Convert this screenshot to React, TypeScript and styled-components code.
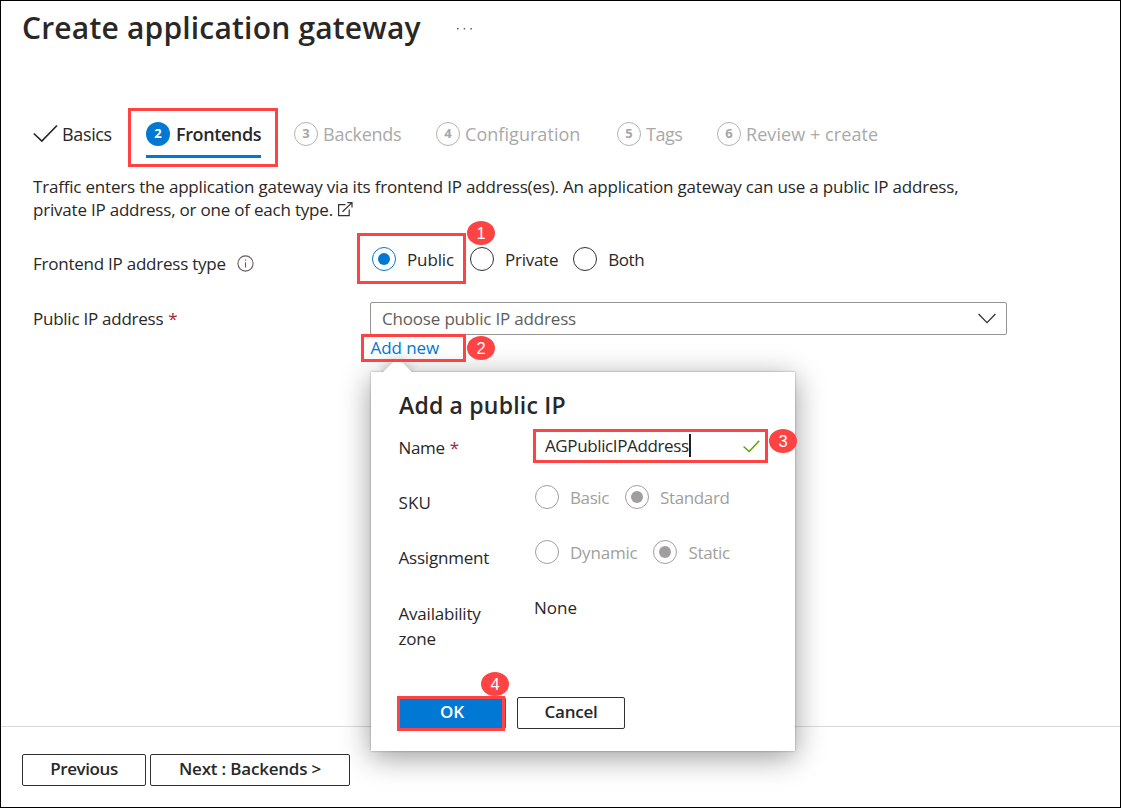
import React from "react";
import styled, { createGlobalStyle, css } from "styled-components";

const RED = "#fd4343";
const BLUE = "#0078d4";
const INK = "#323130";
const MUTED = "#a19f9d";

const GlobalStyle = createGlobalStyle`
  *, *::before, *::after { box-sizing: border-box; }
  body {
    margin: 0;
    background: #fff;
    color: #292827;
    font-family: "Open Sans", "Noto Sans", sans-serif;
    font-size: 17px;
  }
  button { font: inherit; color: inherit; }
`;

const Page = styled.div`
  width: 1121px;
  height: 808px;
  border: 1px solid #000;
  display: flex;
  flex-direction: column;
  overflow: hidden;
`;

const Text = styled.span<{ $ls?: number }>`
  letter-spacing: ${(p) => p.$ls ?? 0}px;
  white-space: nowrap;
`;

const Header = styled.header`
  display: flex;
  height: 107px;
  padding: 7px 0 0 21px;
  gap: 36px;
`;

const Title = styled.h1`
  margin: 0;
  font-size: 30px;
  font-weight: 600;
  line-height: 40px;
`;

const MoreIcon = styled.svg`
  width: 16px;
  height: 4px;
  margin-top: 19px;
`;

const Tabs = styled.nav`
  display: grid;
  grid-template-columns: 95px 166px 142px 181px 100px auto;
  height: 59px;
  padding-left: 32px;
  font-size: 18px;
`;

const Tab = styled.div<{ $disabled?: boolean }>`
  display: flex;
  align-items: center;
  height: 51px;
  gap: 5px;
  color: ${(p) => (p.$disabled ? "#a9a9a9" : "inherit")};
`;

const TabCheck = styled.svg`
  flex: none;
  width: 25px;
  height: 20px;
  margin-right: -1px;
`;

const highlight = css`
  border: 3px solid ${RED};
`;

const ActiveTab = styled.div`
  ${highlight}
  width: 150px;
  height: 59px;
  padding: 0 14px 0 15px;
`;

const ActiveTabInner = styled.div`
  display: flex;
  align-items: center;
  gap: 6px;
  height: 47px;
  padding-top: 1px;
  border-bottom: 3px solid ${BLUE};
  font-weight: 600;
`;

const StepNumber = styled.span<{ $active?: boolean }>`
  display: flex;
  flex: none;
  align-items: center;
  justify-content: center;
  width: 24px;
  height: 24px;
  padding-bottom: 1px;
  border-radius: 50%;
  font-size: 13px;
  font-weight: 700;
  border: ${(p) => (p.$active ? "0" : "1px solid #b3b3b3")};
  background: ${(p) => (p.$active ? BLUE : "#fff")};
  color: ${(p) => (p.$active ? "#fff" : "#a6a6a6")};
`;

const Description = styled.p`
  margin: 8px 0 0 32px;
  line-height: 23px;
  display: flex;
  flex-direction: column;
`;

const DescriptionLine = styled.span`
  display: flex;
  align-items: center;
  gap: 4px;
  height: 23px;
`;

const FormRow = styled.div<{ $top: number }>`
  display: grid;
  grid-template-columns: 324px auto;
  margin-top: ${(p) => p.$top}px;
  padding-left: 32px;
`;

const FormLabel = styled.div<{ $top: number }>`
  display: flex;
  align-items: center;
  height: 24px;
  margin-top: ${(p) => p.$top}px;
`;

const Required = styled.span`
  color: #a4262c;
  margin-left: 5px;
`;

const InfoIcon = styled.svg`
  width: 17px;
  height: 17px;
  margin: 1px 0 0 11px;
`;

const RadioRow = styled.div`
  display: flex;
  align-items: center;
`;

const Highlighted = styled.div<{ $w: number; $h: number; $pad?: number }>`
  ${highlight}
  position: relative;
  z-index: 2;
  display: flex;
  align-items: center;
  width: ${(p) => p.$w}px;
  height: ${(p) => p.$h}px;
  padding-left: ${(p) => p.$pad ?? 0}px;
`;

const Badge = styled.span<{ $left: number; $top: number }>`
  position: absolute;
  left: ${(p) => p.$left}px;
  top: ${(p) => p.$top}px;
  z-index: 3;
  display: flex;
  align-items: center;
  justify-content: center;
  width: 28px;
  height: 24px;
  border-radius: 50%;
  background: ${RED};
  color: #fff;
  font: 400 16.5px "Liberation Sans", sans-serif;
`;

const RadioLabel = styled.label<{ $left?: number; $muted?: boolean }>`
  display: flex;
  align-items: center;
  height: 25px;
  gap: 11px;
  margin-left: ${(p) => p.$left ?? 0}px;
  color: ${(p) => (p.$muted ? MUTED : "inherit")};
  & > ${Text} {
    padding-top: 1px;
  }
`;

const RadioDot = styled.span<{ $color: string; $on?: boolean }>`
  display: flex;
  align-items: center;
  justify-content: center;
  width: 24px;
  height: 24px;
  border: 1px solid ${(p) => p.$color};
  border-radius: 50%;
  &::after {
    content: "";
    width: 12px;
    height: 12px;
    border-radius: 50%;
    background: ${(p) => (p.$on ? p.$color : "transparent")};
  }
`;

const Field = styled.div`
  display: flex;
  flex-direction: column;
  padding-left: 4px;
`;

const Select = styled.div`
  display: flex;
  align-items: center;
  justify-content: space-between;
  width: 637px;
  height: 33px;
  margin-left: 9px;
  padding: 0 10px 0 11px;
  border: 1px solid #979593;
  border-radius: 2px;
  color: #605e5c;
`;

const Chevron = styled.svg`
  width: 18px;
  height: 11px;
`;

const AddNew = styled.div`
  position: relative;
  width: 105px;
  margin-top: -1px;
`;

const Link = styled.a`
  padding-bottom: 1px;
  color: ${BLUE};
`;

const Callout = styled.section`
  position: absolute;
  left: 10px;
  top: 38px;
  z-index: 1;
  width: 424px;
  height: 379px;
  padding: 17px 26px 0 26px;
  background: #fff;
  box-shadow: 0 0 2px rgba(0, 0, 0, 0.35), 0 6px 28px rgba(0, 0, 0, 0.4);
  &::before {
    content: "";
    position: absolute;
    left: 16px;
    top: -10px;
    width: 21px;
    height: 21px;
    transform: rotate(45deg);
    background: #fff;
    box-shadow: 0 0 12px rgba(0, 0, 0, 0.25);
    clip-path: polygon(-60% -60%, 100% -60%, 100% 0, 0 100%, -60% 100%);
  }
`;

const CalloutTitle = styled.h2`
  position: relative;
  margin: 0 0 8px;
  padding-left: 2px;
  font-size: 23px;
  font-weight: 600;
  line-height: 32px;
`;

const CalloutRow = styled.div<{ $h: number }>`
  display: grid;
  grid-template-columns: 136px auto;
  height: ${(p) => p.$h}px;
`;

const CalloutLabel = styled.div`
  padding: 6px 30px 0 1.5px;
  line-height: 25px;
`;

const CalloutValue = styled.div`
  display: flex;
  align-items: center;
  height: 25px;
  padding-left: 1px;
`;

const NameValue = styled(Text)`
  padding-bottom: 2px;
`;

const Caret = styled.span`
  width: 2px;
  height: 23px;
  margin-top: -2px;
  background: #201f1e;
`;

const ValidIcon = styled.svg`
  width: 17px;
  height: 13px;
  margin: 0 5px 0 auto;
`;

const ButtonRow = styled.div<{ $gap: number; $left?: number }>`
  display: flex;
  gap: ${(p) => p.$gap}px;
  padding-left: ${(p) => p.$left ?? 0}px;
`;

const Button = styled.button<{ $w: number; $primary?: boolean }>`
  display: flex;
  justify-content: center;
  width: ${(p) => p.$w}px;
  height: 32px;
  padding: 0;
  border: 1px solid ${(p) => (p.$primary ? BLUE : INK)};
  border-radius: 2px;
  background: ${(p) => (p.$primary ? BLUE : "#fff")};
  color: ${(p) => (p.$primary ? "#fff" : "#292827")};
  font-weight: 600;
  line-height: 28px;
`;

const OkFrame = styled.div`
  position: relative;
  width: 108px;
  &::after {
    ${highlight}
    content: "";
    position: absolute;
    left: -1px;
    top: -1px;
    width: 108px;
    height: 35px;
  }
`;

const Footer = styled.footer`
  height: 81px;
  margin-top: auto;
  padding: 27px 0 0 21px;
  border-top: 1px solid #dadada;
`;

type RadioProps = {
  label: string;
  color: string;
  on?: boolean;
  left?: number;
  muted?: boolean;
  ls?: number;
};

const Radio = ({ label, color, on, left, muted, ls }: RadioProps) => (
  <RadioLabel $left={left} $muted={muted}>
    <RadioDot $color={color} $on={on} />
    <Text $ls={ls}>{label}</Text>
  </RadioLabel>
);

const upcomingSteps = [
  { n: 3, label: "Backends", ls: -0.25 },
  { n: 4, label: "Configuration", ls: 0.05 },
  { n: 5, label: "Tags", ls: -0.5 },
  { n: 6, label: "Review + create", ls: 0.07 },
];

export default function App() {
  return (
    <>
      <GlobalStyle />
      <Page>
        <Header>
          <Title><Text $ls={0.19}>Create application gateway</Text></Title>
          <MoreIcon viewBox="0 0 16 4">
            <path d="M0 1h1.5v1.5H0zM6.7 1h1.5v1.5H6.7zM13.4 1h1.5v1.5h-1.5z" fill="#605e5c" />
          </MoreIcon>
        </Header>
        <Tabs>
          <Tab>
            <TabCheck viewBox="0 0 25 20" fill="none" stroke="#292827" strokeWidth="1.7">
              <path d="M0.8 9.5l8 7.5L24 1.5" />
            </TabCheck>
            <Text $ls={-0.35}>Basics</Text>
          </Tab>
          <ActiveTab>
            <ActiveTabInner>
              <StepNumber $active>2</StepNumber>
              <Text $ls={-0.4}>Frontends</Text>
            </ActiveTabInner>
          </ActiveTab>
          {upcomingSteps.map((s) => (
            <Tab key={s.n} $disabled>
              <StepNumber>{s.n}</StepNumber>
              <Text $ls={s.ls}>{s.label}</Text>
            </Tab>
          ))}
        </Tabs>
        <Description>
          <DescriptionLine>
            <Text $ls={-0.1915}>
              Traffic enters the application gateway via its frontend IP address(es). An application
              gateway can use a public IP address,
            </Text>
          </DescriptionLine>
          <DescriptionLine>
            <Text $ls={-0.21}>private IP address, or one of each type.</Text>
            <svg width="17" height="17" viewBox="0 0 17 17" fill="none" stroke={INK} strokeWidth="1.2">
              <path d="M8.5 3.6H1.6v11h10.6V8.5M5.5 10.8L15 1.6M10.3 1.6H15v4.8" />
            </svg>
          </DescriptionLine>
        </Description>
        <FormRow $top={12}>
          <FormLabel $top={18}>
            <Text $ls={-0.24}>Frontend IP address type</Text>
            <InfoIcon viewBox="0 0 17 17" fill="none" stroke="#605e5c" strokeWidth="1.1">
              <circle cx="8.5" cy="8.5" r="7.6" />
              <path d="M8.5 7.2v5.2M8.5 4.4v1.4" />
            </InfoIcon>
          </FormLabel>
          <RadioRow>
            <Highlighted $w={109} $h={51} $pad={12}>
              <Radio label="Public" color={BLUE} on ls={-0.13} />
              <Badge $left={107} $top={-15}>1</Badge>
            </Highlighted>
            <Radio label="Private" color={INK} left={4} ls={-0.26} />
            <Radio label="Both" color={INK} left={15} ls={-0.4} />
          </RadioRow>
        </FormRow>
        <FormRow $top={18}>
          <FormLabel $top={4}>
            <Text $ls={-0.25}>Public IP address</Text>
            <Required>*</Required>
          </FormLabel>
          <Field>
            <Select>
              <Text $ls={-0.18}>Choose public IP address</Text>
              <Chevron viewBox="0 0 18 11" fill="none" stroke={INK} strokeWidth="1.3">
                <path d="M0.6 1l8.4 8.6L17.4 1" />
              </Chevron>
            </Select>
            <AddNew>
              <Highlighted $w={105} $h={28} $pad={6.5}>
                <Link><Text $ls={-0.07}>Add new</Text></Link>
                <Badge $left={103} $top={-1}>2</Badge>
              </Highlighted>
              <Callout>
                <CalloutTitle><Text $ls={0.2}>Add a public IP</Text></CalloutTitle>
                <CalloutRow $h={55}>
                  <CalloutLabel>
                    <Text $ls={-0.33}>Name</Text>
                    <Required>*</Required>
                  </CalloutLabel>
                  <Highlighted $w={235} $h={34} $pad={9}>
                    <NameValue $ls={-0.38}>AGPublicIPAddress</NameValue>
                    <Caret />
                    <ValidIcon viewBox="0 0 17 13" fill="none" stroke="#57a300" strokeWidth="1.4">
                      <path d="M0.6 6.6l5.6 5L16.2 0.8" />
                    </ValidIcon>
                    <Badge $left={233} $top={-3}>3</Badge>
                  </Highlighted>
                </CalloutRow>
                <CalloutRow $h={55}>
                  <CalloutLabel><Text $ls={0.1}>SKU</Text></CalloutLabel>
                  <CalloutValue>
                    <Radio label="Basic" color={MUTED} muted left={1} ls={-0.4} />
                    <Radio label="Standard" color={MUTED} on muted left={16} ls={-0.36} />
                  </CalloutValue>
                </CalloutRow>
                <CalloutRow $h={56}>
                  <CalloutLabel><Text $ls={-0.2}>Assignment</Text></CalloutLabel>
                  <CalloutValue>
                    <Radio label="Dynamic" color={MUTED} muted left={1} ls={-0.21} />
                    <Radio label="Static" color={MUTED} on muted left={16} ls={-0.34} />
                  </CalloutValue>
                </CalloutRow>
                <CalloutRow $h={102}>
                  <CalloutLabel><Text $ls={-0.21}>Availability</Text> <Text $ls={-0.2}>zone</Text></CalloutLabel>
                  <CalloutValue><Text>None</Text></CalloutValue>
                </CalloutRow>
                <ButtonRow $gap={11} $left={1}>
                  <OkFrame>
                    <Button $w={108} $primary><Text>OK</Text></Button>
                    <Badge $left={83} $top={-25}>4</Badge>
                  </OkFrame>
                  <Button $w={108}><Text $ls={-0.2}>Cancel</Text></Button>
                </ButtonRow>
              </Callout>
            </AddNew>
          </Field>
        </FormRow>
        <Footer>
          <ButtonRow $gap={4}>
            <Button $w={124}><Text $ls={-0.4}>Previous</Text></Button>
            <Button $w={200}><Text $ls={-0.2}>Next : Backends &gt;</Text></Button>
          </ButtonRow>
        </Footer>
      </Page>
    </>
  );
}
